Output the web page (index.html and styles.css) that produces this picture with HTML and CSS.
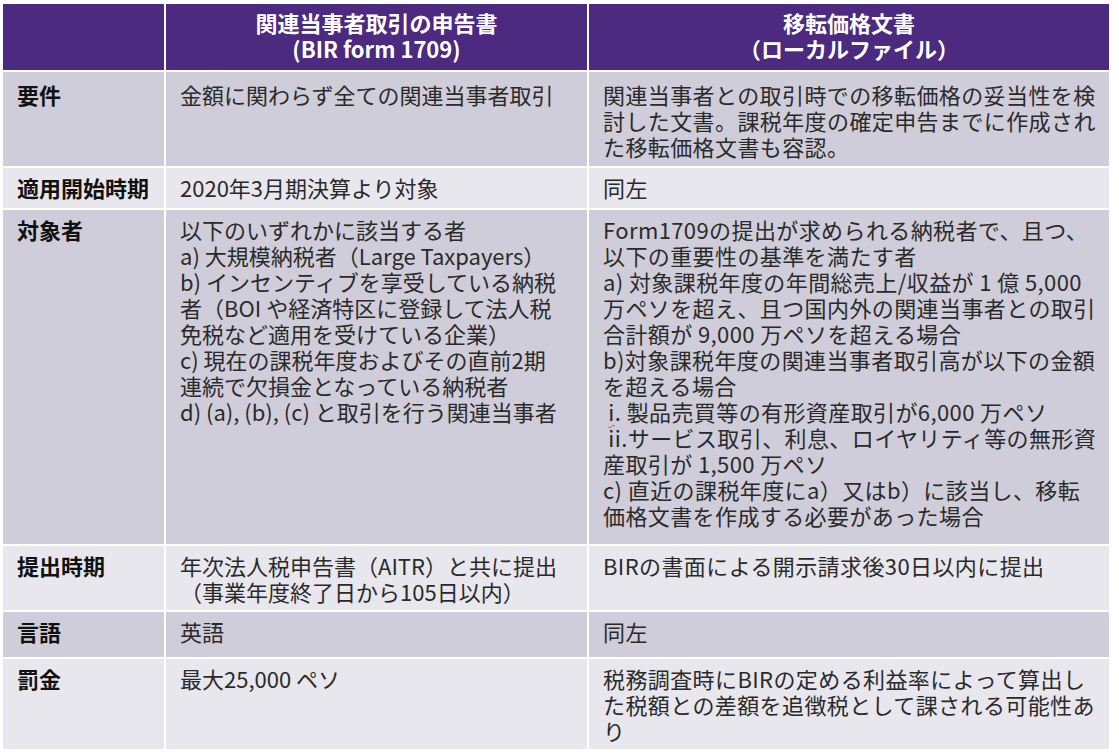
FILE: index.html
```html
<!DOCTYPE html>
<html lang="ja">
<head>
<meta charset="utf-8">
<title>関連当事者取引の申告書と移転価格文書</title>
<link rel="stylesheet" href="styles.css">
</head>
<body>
<table class="cmp">
  <colgroup>
    <col class="c-label">
    <col class="c-form">
    <col class="c-doc">
  </colgroup>
  <thead>
    <tr class="r-head">
      <th></th>
      <th>関連当事者取引の申告書<br>(BIR form 1709)</th>
      <th>移転価格文書<br>（ローカルファイル）</th>
    </tr>
  </thead>
  <tbody>
    <tr class="dark r-req">
      <td class="label">要件</td>
      <td>金額に関わらず全ての関連当事者取引</td>
      <td class="wide">関連当事者との取引時での移転価格の妥当性を検<br>討した文書。課税年度の確定申告までに作成され<br>た移転価格文書も容認。</td>
    </tr>
    <tr class="light r-start">
      <td class="label">適用開始時期</td>
      <td>2020年3月期決算より対象</td>
      <td class="wide">同左</td>
    </tr>
    <tr class="dark r-target">
      <td class="label">対象者</td>
      <td>以下のいずれかに該当する者<br>a) 大規模納税者（Large Taxpayers）<br>b) インセンティブを享受している納税<br>者（BOI や経済特区に登録して法人税<br>免税など適用を受けている企業）<br>c) 現在の課税年度およびその直前2期<br>連続で欠損金となっている納税者<br>d) (a), (b), (c) と取引を行う関連当事者</td>
      <td class="wide">Form1709の提出が求められる納税者で、且つ、<br>以下の重要性の基準を満たす者<br>a) 対象課税年度の年間総売上/収益が 1 億 5,000<br>万ペソを超え、且つ国内外の関連当事者との取引<br>合計額が 9,000 万ペソを超える場合<br>b)対象課税年度の関連当事者取引高が以下の金額<br>を超える場合<br>&nbsp;<span class="squiggle">i</span>. 製品売買等の有形資産取引が6,000 万ペソ<br>&nbsp;ii.サービス取引、利息、ロイヤリティ等の無形資<br>産取引が 1,500 万ペソ<br>c) 直近の課税年度にa）又はb）に該当し、移転<br>価格文書を作成する必要があった場合</td>
    </tr>
    <tr class="light r-when">
      <td class="label">提出時期</td>
      <td>年次法人税申告書（AITR）と共に提出<br>（事業年度終了日から105日以内）</td>
      <td class="wide">BIRの書面による開示請求後30日以内に提出</td>
    </tr>
    <tr class="dark r-lang">
      <td class="label">言語</td>
      <td>英語</td>
      <td class="wide">同左</td>
    </tr>
    <tr class="light r-fine">
      <td class="label">罰金</td>
      <td>最大25,000 ペソ</td>
      <td class="wide">税務調査時にBIRの定める利益率によって算出し<br>た税額との差額を追徴税として課される可能性あ<br>り</td>
    </tr>
  </tbody>
</table>
</body>
</html>
```
FILE: styles.css
```css
html, body {
  margin: 0;
  padding: 0;
  background: #ffffff;
}

body {
  font-family: "Noto Sans CJK JP", "Noto Sans", sans-serif;
  color: #2a2a2a;
  padding: 2px 0 0 1px;
}

.cmp {
  border-collapse: collapse;
  table-layout: fixed;
  width: 1108px;
  font-size: 22px;
  line-height: 26px;
}

.c-label { width: 163px; }
.c-form { width: 423px; }
.c-doc { width: 522px; }

.cmp th,
.cmp td {
  border: 2px solid #ffffff;
  vertical-align: top;
  padding: 6px 8px 6px 14px;
  white-space: nowrap;
  overflow: hidden;
}

.cmp th {
  background: #4b2a7f;
  color: #ffffff;
  font-weight: 700;
  text-align: center;
  vertical-align: top;
  padding: 5px 8px;
}

.dark td { background: #cfcdd9; }
.light td { background: #e8e7ee; }

.label {
  font-weight: 700;
  color: #111111;
}

.wide {
  letter-spacing: 0.4px;
}

.squiggle {
  text-decoration: underline wavy #d04040;
  text-decoration-thickness: 1px;
  text-underline-offset: 3px;
}

.r-head { height: 68px; }
.r-req { height: 96px; }
.r-start { height: 42px; }
.r-target { height: 336px; }
.r-when { height: 66px; }
.r-lang { height: 47px; }
.r-fine { height: 92px; }

.r-req td { padding-top: 9px; }
```
